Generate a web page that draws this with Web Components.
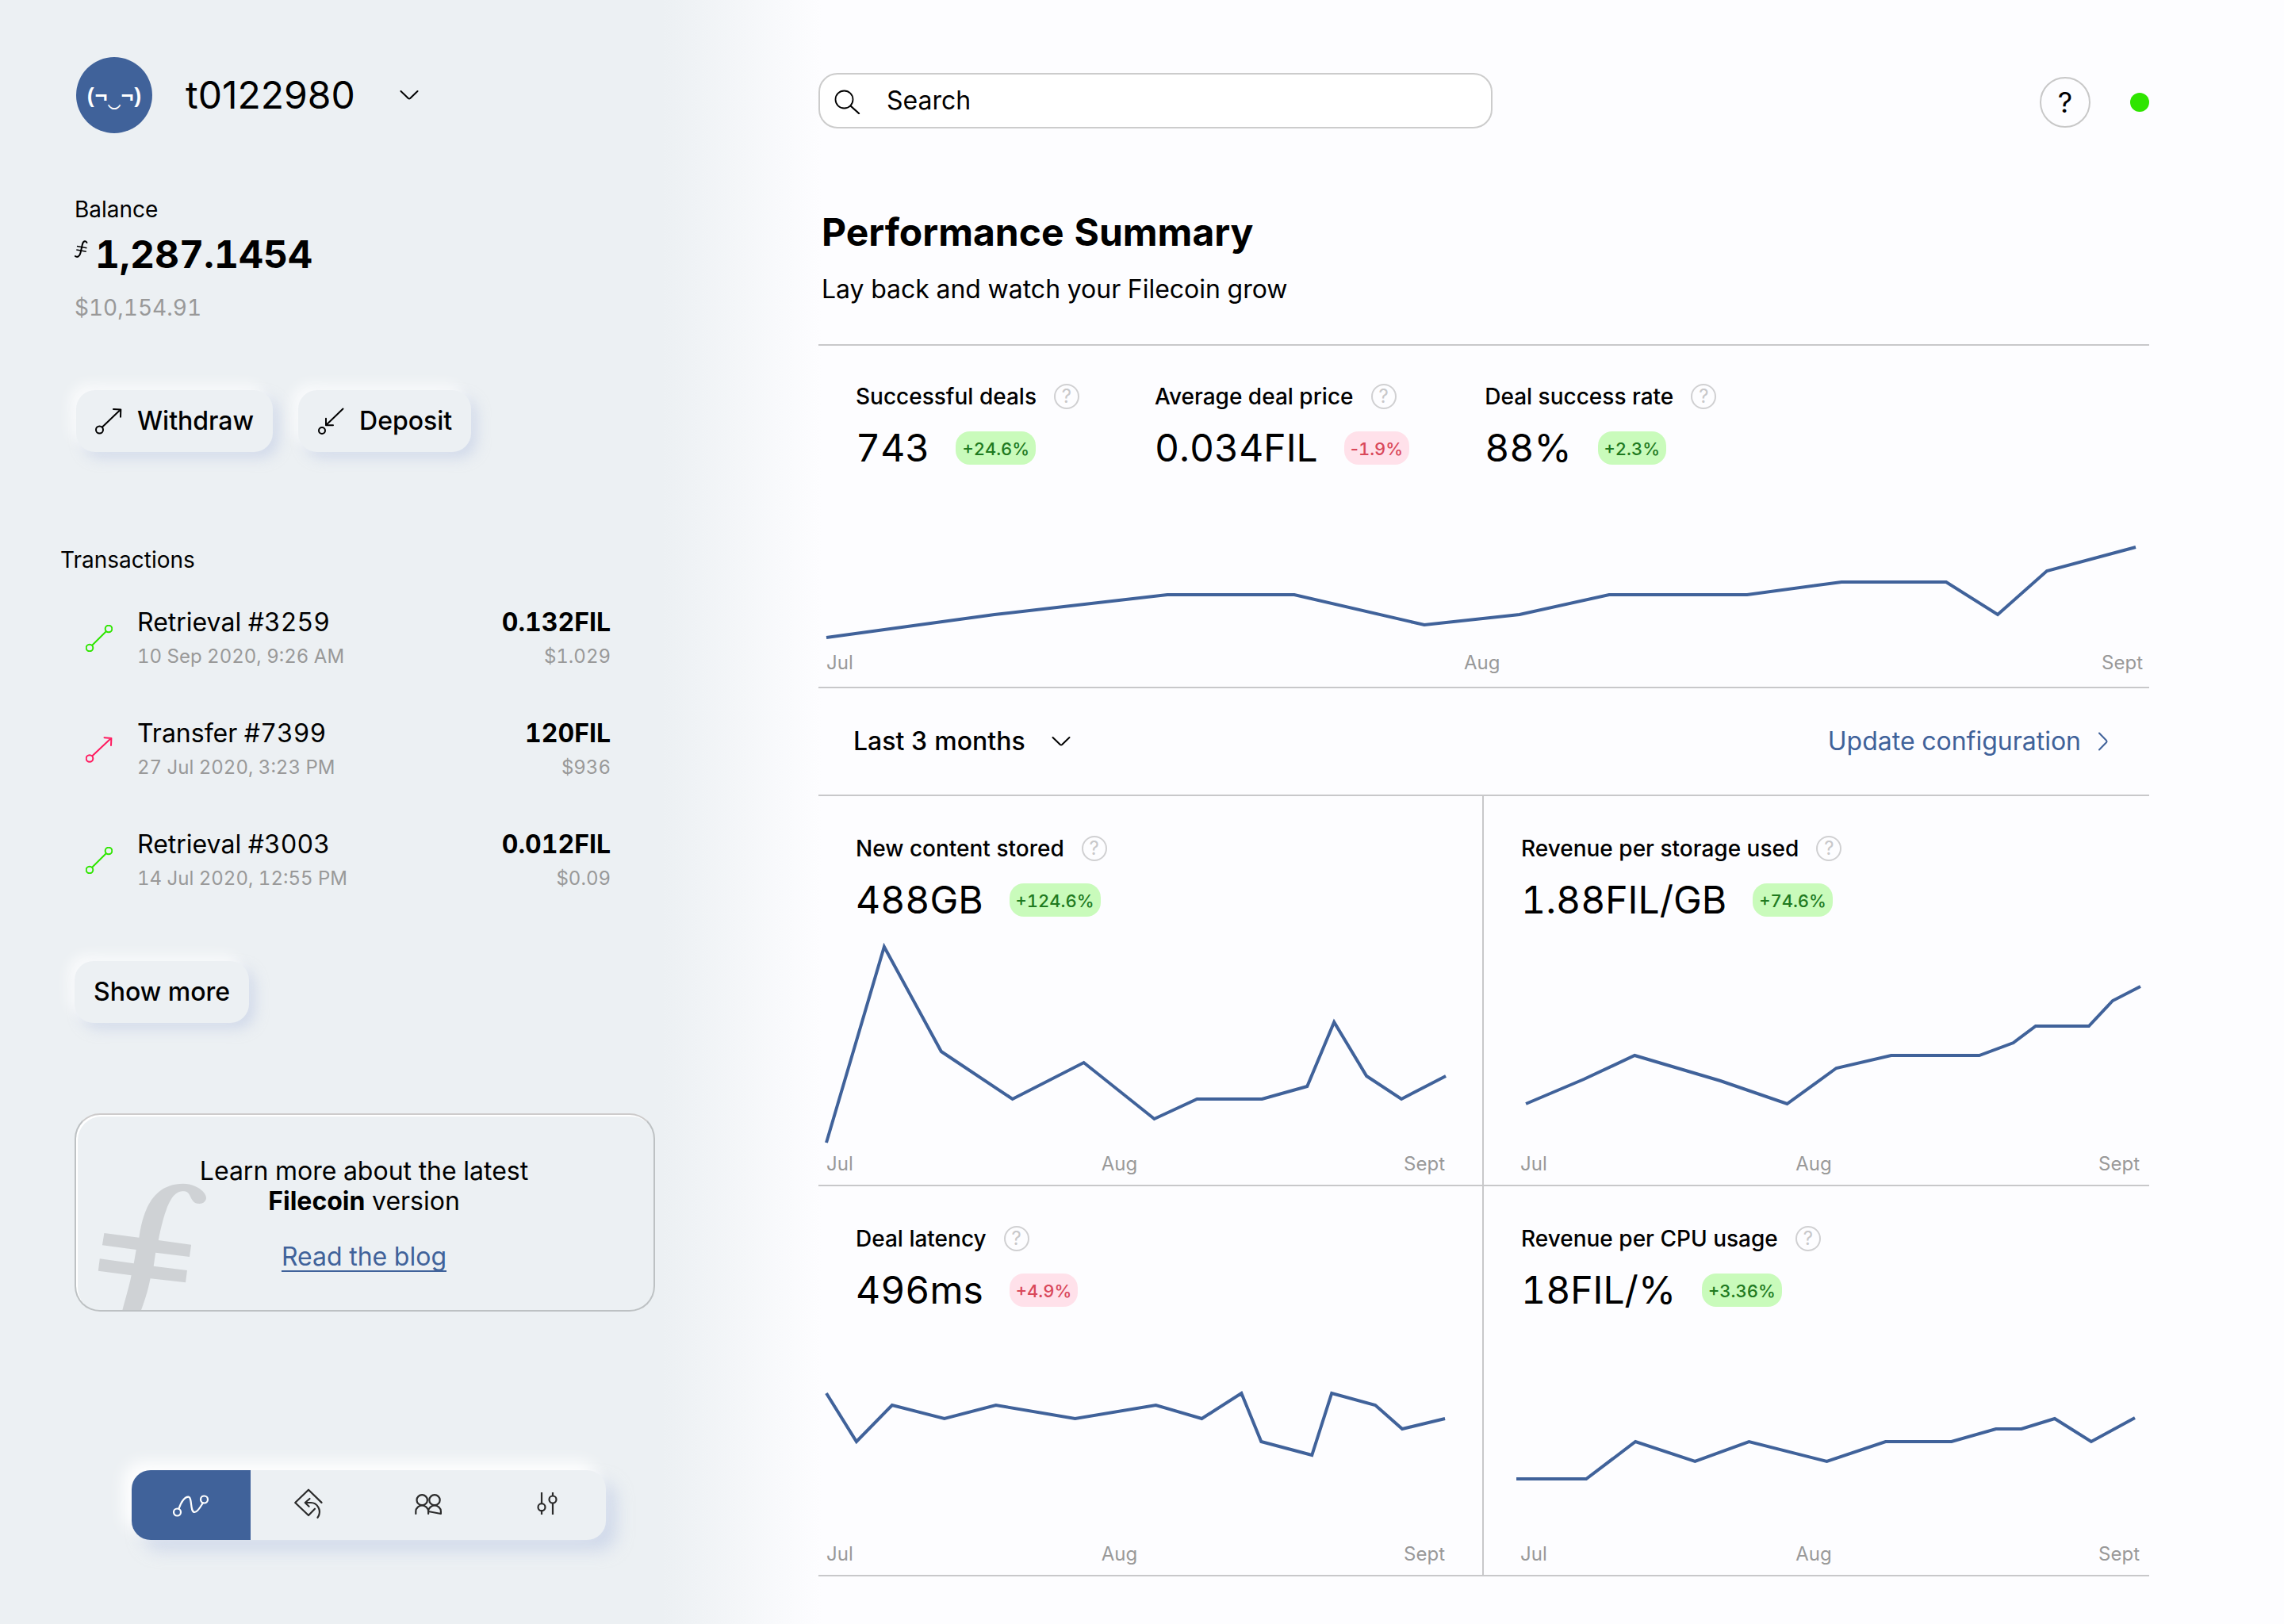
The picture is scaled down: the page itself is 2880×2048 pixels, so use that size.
<!DOCTYPE html>
<html lang="en">
<head>
<meta charset="utf-8">
<meta name="viewport" content="width=device-width, initial-scale=1">
<title>Filecoin dashboard</title>
<style>
  html { --ink: #000; --muted: #999; --line: #c8c8ca; --blue: #40629a; --surface: #ecf0f3; }
  body {
    margin: 0;
    min-height: 100vh;
    color: var(--ink);
    font-family: Inter, "Liberation Sans", sans-serif;
    font-optical-sizing: none;
    font-variant-numeric: tabular-nums;
    font-size: 32px;
    line-height: 40px;
    background: linear-gradient(90deg, var(--surface) 29%, #fdfdff 36%);
  }
</style>
</head>
<body>
<fc-layout>
  <fc-account slot="side" name="t0122980"></fc-account>
  <fc-balance slot="side" amount="1,287.1454" fiat="$10,154.91"></fc-balance>
  <fc-actions slot="side">
    <fc-button icon="withdraw">Withdraw</fc-button>
    <fc-button icon="deposit">Deposit</fc-button>
  </fc-actions>
  <fc-transactions slot="side">
    <fc-transaction kind="retrieval" name="Retrieval #3259" date="10 Sep 2020, 9:26 AM" amount="0.132FIL" fiat="$1.029"></fc-transaction>
    <fc-transaction kind="transfer" name="Transfer #7399" date="27 Jul 2020, 3:23 PM" amount="120FIL" fiat="$936"></fc-transaction>
    <fc-transaction kind="retrieval" name="Retrieval #3003" date="14 Jul 2020, 12:55 PM" amount="0.012FIL" fiat="$0.09"></fc-transaction>
  </fc-transactions>
  <fc-more slot="side"><fc-button>Show more</fc-button></fc-more>
  <fc-promo slot="side">Learn more about the latest<br><b>Filecoin</b> version<a slot="link" href="#blog">Read the blog</a></fc-promo>
  <fc-nav slot="side"></fc-nav>

  <fc-topbar></fc-topbar>
  <fc-heading>Performance Summary<span slot="sub">Lay back and watch your Filecoin grow</span></fc-heading>
  <fc-overview>
    <fc-metric label="Successful deals" value="743" change="+24.6%"></fc-metric>
    <fc-metric label="Average deal price" value="0.034FIL" change="-1.9%" tone="bad"></fc-metric>
    <fc-metric label="Deal success rate" value="88%" change="+2.3%"></fc-metric>
    <fc-chart slot="chart" label="Deals over time" width="1678" height="227"
      points="10,212 222,183 440,158 600,158 764,196 884,183 997,158 1171,158 1290,142 1422,142 1487,183 1549,128 1661,98"></fc-chart>
  </fc-overview>
  <fc-toolbar></fc-toolbar>
  <fc-grid>
    <fc-card>
      <fc-metric label="New content stored" value="488GB" change="+124.6%"></fc-metric>
      <fc-chart slot="chart" label="New content stored" width="838" height="289"
        points="10,279 83,32 155,164 245,224 335,178 424,249 478,224 560,224 617,208 651,127 692,195 736,224 792,195"></fc-chart>
    </fc-card>
    <fc-card side="right">
      <fc-metric label="Revenue per storage used" value="1.88FIL/GB" change="+74.6%"></fc-metric>
      <fc-chart slot="chart" label="Revenue per storage used" width="838" height="289"
        points="53,230 126,199 190,169 298,201 382,230 444,185 513,169 624,169 667,153 695,132 762,132 792,100 827,82"></fc-chart>
    </fc-card>
    <fc-card>
      <fc-metric label="Deal latency" value="496ms" change="+4.9%" tone="bad"></fc-metric>
      <fc-chart slot="chart" label="Deal latency" width="838" height="289"
        points="10,103 48,164 93,118 159,135 224,118 324,135 426,118 484,135 534,103 559,164 623,181 648,103 703,118 737,148 791,135"></fc-chart>
    </fc-card>
    <fc-card side="right">
      <fc-metric label="Revenue per CPU usage" value="18FIL/%" change="+3.36%"></fc-metric>
      <fc-chart slot="chart" label="Revenue per CPU usage" width="838" height="289"
        points="41,211 129,211 191,164 266,189 334,164 432,189 506,164 589,164 645,148 677,148 719,135 765,164 820,134"></fc-chart>
    </fc-card>
  </fc-grid>
</fc-layout>

<script>
const BASE = `
  *, *::before { box-sizing: border-box; }
  :host { display: block; }
  button, input, select { font: inherit; font-optical-sizing: inherit; font-variant-numeric: inherit; color: inherit; margin: 0; padding: 0; border: 0; background: none; }
  button, select, a { cursor: pointer; }
  select { appearance: none; }
  svg { display: block; flex: none; fill: none; stroke: currentColor; stroke-linecap: round; stroke-linejoin: round; }
`;

function define(name, render) {
  customElements.define(name, class extends HTMLElement {
    connectedCallback() {
      if (this.shadowRoot) return;
      const [css, html] = render(this);
      this.attachShadow({ mode: 'open' }).innerHTML = `<style>${BASE}${css}</style>${html}`;
    }
  });
}

const ICONS = {
  withdraw: '<circle cx="5.5" cy="28" r="4.5"/><path d="M9 24.5 32 2.5M23 2l9.3.4L32 11.7"/>',
  deposit: '<circle cx="6" cy="29" r="4"/><path d="M32.5 1.5 11 22.3M11 13.7v8.6h9"/>',
  retrieval: '<circle cx="5" cy="29" r="4.3"/><circle cx="29" cy="5" r="4.3"/><path d="M8.2 25.8 25.8 8.2"/>',
  transfer: '<circle cx="5" cy="28.5" r="4.3"/><path d="M8.4 25.2 32 3M23.5 2.2 32.4 3 32 12"/>',
};
const icon = name => `<svg width="34" height="34" viewBox="0 0 34 34" stroke-width="2" aria-hidden="true">${ICONS[name]}</svg>`;
const chevron = '<svg width="24" height="14" viewBox="0 0 24 14" stroke-width="2" aria-hidden="true"><path d="m1.500 2 9.300 9q1.200 1 2.400 0L22.500 2"/></svg>';

define('fc-layout', () => [`
  :host { display: grid; grid-template-columns: 43fr 77fr; }
  aside { padding: 72px 206px 60px 94px; min-width: 0; }
  main { padding: 92px 170px 60px 0; min-width: 0; }
`, `<aside><slot name="side"></slot></aside><main><slot></slot></main>`]);

define('fc-account', el => [`
  :host { display: flex; align-items: center; gap: 42px; padding-left: 2px; font-variant-numeric: normal; }
  .avatar { display: grid; place-items: center; width: 96px; height: 96px; border-radius: 50%; background: var(--blue); color: #fff;
    font: bold 28px/32px "Noto Sans", "DejaVu Sans", sans-serif; white-space: nowrap; }
  label { display: flex; align-items: center; gap: 56px; font-size: 48px; line-height: 56px; }
  select { height: 56px; }
`, `<span class="avatar">(¬‿¬)</span>
   <label><select aria-label="Account"><option>${el.getAttribute('name')}</option></select>${chevron}</label>`]);

define('fc-balance', el => [`
  :host { padding-top: 78px; }
  .label { font-size: 28px; line-height: 36px; }
  .amount { display: flex; gap: 9px; margin-top: 11px; font-size: 48px; line-height: 56px; font-weight: 700; }
  .amount svg { margin-top: 10px; }
  .fiat { margin-top: 21px; font-size: 28px; line-height: 36px; color: var(--muted); }
`, `<div class="label">Balance</div>
   <div class="amount"><svg width="17" height="22" viewBox="0 0 17 22" stroke-width="2" aria-hidden="true"><path d="M15.5 3C14.500.3 11 .2 9.800 5.500L7.600 15.500C6.500 20.500 3.500 22 .8 20"/><path stroke-width="1.600" stroke-linecap="butt" d="m3 7.500 12.500 2.200M2.300 12l12.500 2.200"/></svg>${el.getAttribute('amount')}</div>
   <div class="fiat">${el.getAttribute('fiat')}</div>`]);

define('fc-actions', () => [`:host { display: flex; gap: 32px; padding: 86px 0 0 2px; }`, `<slot></slot>`]);
define('fc-more', () => [`:host { display: flex; padding-top: 88px; }`, `<slot></slot>`]);

define('fc-button', el => [`
  button { display: flex; align-items: center; gap: 19px; padding: 19px 24px; border-radius: 24px; font-weight: 500; line-height: 40px;
    background: var(--surface); box-shadow: -8px -8px 16px rgba(255,255,255,.7), 8px 8px 16px rgba(188,200,228,.5); }
`, `<button type="button">${el.hasAttribute('icon') ? icon(el.getAttribute('icon')) : ''}<slot></slot></button>`]);

define('fc-transactions', () => [`
  :host { padding-top: 118px; margin-left: -18px; }
  h2 { margin: 0 0 41px; font-size: 28px; line-height: 36px; font-weight: 400; }
  .list { display: flex; flex-direction: column; gap: 61px; padding: 0 56px 0 32px; }
`, `<h2>Transactions</h2><div class="list"><slot></slot></div>`]);

define('fc-transaction', el => [`
  :host { display: flex; align-items: center; gap: 31px; }
  svg { color: ${el.getAttribute('kind') === 'transfer' ? '#ff1a5e' : '#2fe500'}; }
  .text { flex: 1; }
  .sum { text-align: right; }
  .sum b { display: block; font-weight: 700; }
  small { display: block; margin-top: 7px; font-size: 24px; line-height: 32px; color: var(--muted); }
`, `${icon(el.getAttribute('kind'))}
   <div class="text">${el.getAttribute('name')}<small>${el.getAttribute('date')}</small></div>
   <div class="sum"><b>${el.getAttribute('amount')}</b><small>${el.getAttribute('fiat')}</small></div>`]);

define('fc-promo', () => [`
  :host { position: relative; overflow: hidden; margin-top: 114px; padding: 52px 26px 48px 24px; text-align: center; line-height: 38px;
    border: 2px solid #bdc1c3; border-top-color: #cdcbcb; border-radius: 32px; box-shadow: inset 2px 2px 0 #fff; }
  svg { position: absolute; left: 0; bottom: -2px; fill: #000; fill-opacity: .12; stroke: none; }
  p { position: relative; margin: 0 0 32px; }
  ::slotted(b) { font-weight: 700; }
  ::slotted(a) { position: relative; color: var(--blue); text-decoration: underline 2px; text-underline-offset: 6px; text-decoration-skip-ink: none; }
`, `<svg width="180" height="248" viewBox="0 0 180 248" aria-hidden="true"><path d="M57.900 248C63 228 67 216 69.600 202.200L27.800 196.700 29.800 181.300 72.700 187.300 75.700 170 32.900 164.300 35.400 149 79.300 154.700C83 130 92 86.700 135 86.700C151 86.700 164 97 164 104.500C164 109 160 112 155.300 112C148 112 146 107 143.500 102C141.500 98 139.500 96.300 135 96.300C124 96.300 114 106 103.800 158L145.100 163.700 143 179 100.200 173.700 97.700 190.700 140 196 138 211.300 93.600 206.300C90 224 86 236 81.300 248Z"/></svg>
   <p><slot></slot></p><slot name="link"></slot>`]);

define('fc-nav', () => [`
  :host { margin: 200px 62px 0 72px; }
  nav { display: grid; grid-template-columns: repeat(4, 1fr); border-radius: 24px; background: var(--surface); color: #2b2b2b;
    box-shadow: -10px -10px 20px #fff, 14px 14px 20px rgba(188,200,228,.55); }
  button { display: grid; place-items: center; height: 88px; }
  button[aria-current] { background: var(--blue); color: #fff; border-radius: 24px 0 0 24px; }
`, `<nav aria-label="Sections">
    <button type="button" aria-label="Performance" aria-current="page"><svg width="48" height="48" viewBox="0 0 48 48" stroke-width="2.200"><circle cx="6.500" cy="33" r="4.500"/><circle cx="40.500" cy="17" r="4.500"/><path d="M8.500 28.500C12 19 16 13.700 20.300 13.700 26 13.700 22 33 28.500 33 32 33 35.500 27 38.800 21.200"/></svg></button>
    <button type="button" aria-label="Deals"><svg width="48" height="48" viewBox="0 0 48 48" stroke-width="2.200"><path d="M39.500 20.900 23 4.700 6.200 21 23 37l8-8.300M24.500 16l-5.800 5 4.900 4.700M18.700 21H26c9 0 12 10 10.500 14.500q-.5 2.500-2 4.300"/></svg></button>
    <button type="button" aria-label="Peers"><svg width="48" height="48" viewBox="0 0 48 48" stroke-width="2.200"><ellipse cx="16.200" cy="17.700" rx="6.700" ry="6.500"/><ellipse cx="32" cy="17.700" rx="6.700" ry="6.500"/><path d="M8.300 35v-3c0-4.500 4-7.500 7.900-7.500s7.900 3 7.900 7.500v3m0-3c0-4.500 4-7.500 7.900-7.500s7.900 3 7.900 7.500v3Z"/></svg></button>
    <button type="button" aria-label="Settings"><svg width="48" height="48" viewBox="0 0 48 48" stroke-width="2.200"><circle cx="18" cy="26.700" r="4.500"/><circle cx="32" cy="17" r="4.500"/><path stroke-linecap="butt" d="M18 8v14M18 31v5M32 8v4.500M32 21.500V36"/></svg></button>
  </nav>`]);

define('fc-topbar', () => [`
  :host { display: flex; align-items: center; justify-content: space-between; }
  .search { display: flex; align-items: center; gap: 32px; flex: 0 1 850px; height: 70px; padding: 0 18px;
    border: 2px solid #ccc; border-radius: 24px; background: #fff; }
  input { flex: 1; min-width: 0; height: 40px; outline: none; }
  input::placeholder { color: inherit; opacity: 1; }
  .tools { display: flex; align-items: center; gap: 50px; padding-top: 4px; }
  .help { width: 64px; height: 64px; border: 2px solid #c8c8c8; border-radius: 50%; font-size: 36px; line-height: 40px; }
  .status { width: 24px; height: 24px; border-radius: 50%; background: #2fe500; }
`, `<label class="search"><svg width="34" height="34" viewBox="0 0 34 34" stroke-width="1.800" aria-hidden="true"><circle cx="12.500" cy="15.500" r="11"/><path stroke-width="2.300" d="m20.500 23.500 10.500 9.500"/></svg><input type="search" placeholder="Search" aria-label="Search"></label>
   <div class="tools"><button class="help" type="button" aria-label="Help">?</button><span class="status" role="img" aria-label="Online"></span></div>`]);

define('fc-heading', () => [`
  :host { padding: 103px 0 49px 4px; }
  h1 { margin: 0 0 24px; font-size: 48px; line-height: 56px; font-weight: 700; }
  p { margin: 0; }
`, `<h1><slot></slot></h1><p><slot name="sub"></slot></p>`]);

define('fc-overview', () => [`
  :host { border: solid var(--line); border-width: 2px 0; padding: 46px 0 13px; }
  .metrics { display: flex; flex-wrap: wrap; gap: 0 95px; padding: 0 47px; }
  ::slotted(fc-chart) { --axis: 0 8px 0 10px; --columns: 1fr 1fr auto; }
`, `<div class="metrics"><slot></slot></div><slot name="chart"></slot>`]);

// Digits line up in fixed-width figures; the signs beside them keep their own widths.
const figure = (text, signs) => text.replace(signs, '<span class="sign">$&</span>');

define('fc-metric', el => [`
  .row { display: flex; align-items: center; }
  .label { gap: 22px; font-size: 28px; line-height: 36px; font-weight: 500; }
  .value { gap: 33px; margin-top: 20px; font-size: 48px; line-height: 54px; }
  .sign { font-variant-numeric: normal; }
  button { width: 32px; height: 32px; border: 2px solid #d0d0d2; border-radius: 50%; color: #c8c8ca; font-size: 24px; line-height: 28px; font-weight: 400; }
  .change { padding: 6px 8px 4px; border-radius: 18px; font-size: 22px; line-height: 32px; font-weight: 500;
    ${el.getAttribute('tone') === 'bad' ? 'background: #ffe1ea; color: #d9485a;' : 'background: #c9fbbb; color: #1f7a1f;'} }
`, `<div class="row label">${el.getAttribute('label')}<button type="button" aria-label="About ${el.getAttribute('label')}">?</button></div>
   <div class="row value"><span>${figure(el.getAttribute('value'), /%/)}</span><span class="change">${figure(el.getAttribute('change'), /-/)}</span></div>`]);

define('fc-chart', el => {
  const w = el.getAttribute('width'), h = el.getAttribute('height');
  return [`
  svg { width: 100%; height: ${h}px; overflow: visible; color: var(--blue); stroke-linejoin: miter; stroke-linecap: butt; }
  polyline { vector-effect: non-scaling-stroke; }
  .axis { display: grid; grid-template-columns: var(--columns); padding: var(--axis); font-size: 24px; line-height: 34px; color: var(--muted); }
`, `<svg viewBox="0 0 ${w} ${h}" preserveAspectRatio="none" stroke-width="4" role="img" aria-label="${el.getAttribute('label')}"><polyline points="${el.getAttribute('points')}"/></svg>
   <div class="axis"><span>Jul</span><span>Aug</span><span>Sept</span></div>`];
});

define('fc-toolbar', () => [`
  :host { display: flex; align-items: center; justify-content: space-between; padding: 47px 52px 47px 44px; }
  label { display: flex; align-items: center; gap: 33px; font-weight: 500; }
  select { height: 40px; }
  a { display: flex; align-items: center; gap: 22px; color: var(--blue); text-decoration: none; }
`, `<label><select aria-label="Period"><option>Last 3 months</option></select>${chevron}</label>
   <a href="#configuration">Update configuration<svg width="12" height="24" viewBox="0 0 12 24" stroke-width="2" aria-hidden="true"><path d="m1 1.500 9 9.300q1 1.200 0 2.400L1 22.500"/></svg></a>`]);

define('fc-grid', () => [`
  :host { display: grid; grid-template-columns: 1fr 1fr; border-top: 2px solid var(--line); }
`, `<slot></slot>`]);

define('fc-card', el => [`
  :host { padding: 48px 0 9px; border-bottom: 2px solid var(--line); ${el.getAttribute('side') === 'right' ? '' : 'border-right: 2px solid var(--line);'} }
  .metric { padding: 0 47px; }
  ::slotted(fc-chart) { --columns: 10fr 11fr auto; --axis: ${el.getAttribute('side') === 'right' ? '0 12px 0 46px' : '0 47px 0 10px'}; }
`, `<div class="metric"><slot></slot></div><slot name="chart"></slot>`]);
</script>
</body>
</html>
